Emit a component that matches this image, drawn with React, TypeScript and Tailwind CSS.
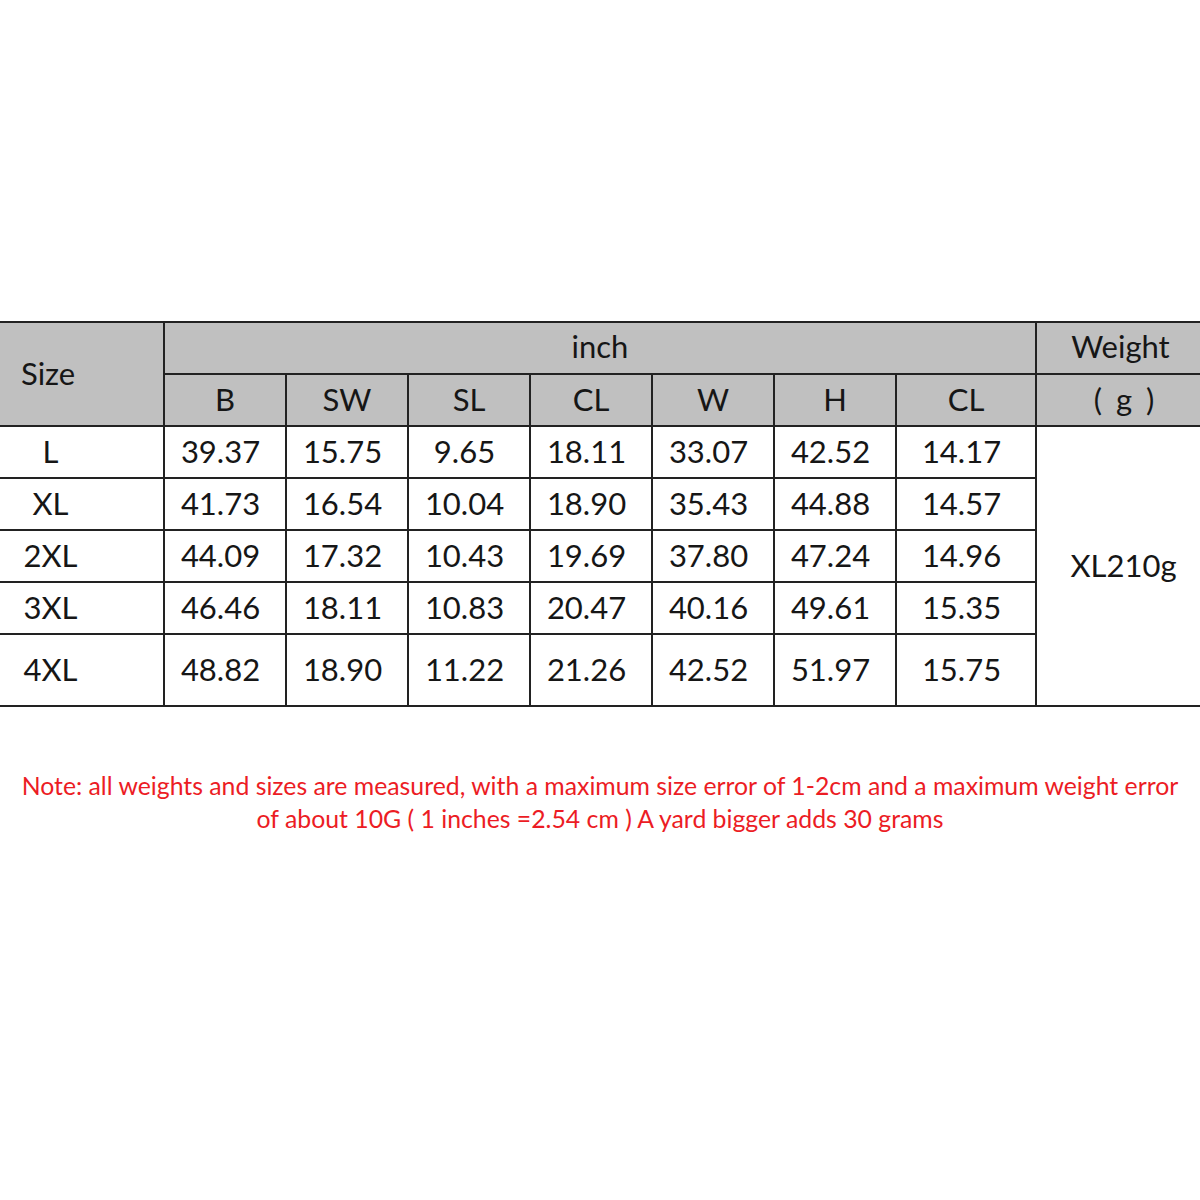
const sizes = [
  { size: 'L', values: ['39.37', '15.75', '9.65', '18.11', '33.07', '42.52', '14.17'] },
  { size: 'XL', values: ['41.73', '16.54', '10.04', '18.90', '35.43', '44.88', '14.57'] },
  { size: '2XL', values: ['44.09', '17.32', '10.43', '19.69', '37.80', '47.24', '14.96'] },
  { size: '3XL', values: ['46.46', '18.11', '10.83', '20.47', '40.16', '49.61', '15.35'] },
  { size: '4XL', values: ['48.82', '18.90', '11.22', '21.26', '42.52', '51.97', '15.75'] },
];

const columns = ['B', 'SW', 'SL', 'CL', 'W', 'H', 'CL'];

export default function App() {
  return (
    <div
      className="w-[1200px] h-[1200px] bg-white pt-[321px] text-[#161616]"
      style={{ fontFamily: 'Lato, "Open Sans", sans-serif' }}
    >
      <table className="w-[1200px] table-fixed border-collapse text-[31px] leading-none">
        <colgroup>
          <col className="w-[164px]" />
          <col className="w-[122px]" />
          <col className="w-[122px]" />
          <col className="w-[122px]" />
          <col className="w-[122px]" />
          <col className="w-[122px]" />
          <col className="w-[122px]" />
          <col className="w-[140px]" />
          <col className="w-[164px]" />
        </colgroup>
        <thead className="bg-[#c0c0c0]">
          <tr className="h-[52px]">
            <th
              rowSpan={2}
              className="border-2 border-l-0 border-[#222] font-normal text-left pl-[21px] pb-[2px]"
            >
              Size
            </th>
            <th colSpan={7} className="border-2 border-[#222] font-normal pb-[3px]">
              inch
            </th>
            <th className="border-2 border-r-0 border-[#222] font-normal pl-[4px] pb-[3px]">Weight</th>
          </tr>
          <tr className="h-[52px]">
            {columns.map((c, i) => (
              <th key={i} className="border-2 border-[#222] font-normal pb-[2px]">
                {c}
              </th>
            ))}
            <th className="border-2 border-r-0 border-[#222] font-normal tracking-[3px] pl-[14px] pb-[2px]">( g )</th>
          </tr>
        </thead>
        <tbody>
          {sizes.map((row, r) => (
            <tr key={row.size} className={r === 4 ? 'h-[72px]' : 'h-[52px]'}>
              <td className="border-2 border-l-0 border-[#222] pr-[62px] text-center pb-[2px]">{row.size}</td>
              {row.values.map((v, i) => (
                <td key={i} className="border-2 border-[#222] text-center pr-[9px] pb-[2px]">
                  {v}
                </td>
              ))}
              {r === 0 && (
                <td rowSpan={5} className="border-2 border-r-0 border-[#222] text-center pl-[10px] pb-[2px]">
                  XL210g
                </td>
              )}
            </tr>
          ))}
        </tbody>
      </table>

      <div className="mt-[62px] text-center text-[#ec1c24] text-[24.8px] leading-[33px]">
        <p>Note: all weights and sizes are measured, with a maximum size error of 1-2cm and a maximum weight error</p>
        <p>of about 10G ( 1 inches =2.54 cm ) A yard bigger adds 30 grams</p>
      </div>
    </div>
  );
}
